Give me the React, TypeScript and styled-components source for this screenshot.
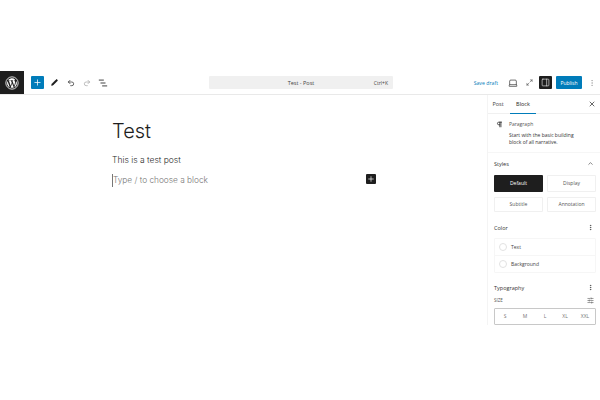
import React from "react";
import styled, { createGlobalStyle } from "styled-components";
import { Plus, Undo2, Redo2, X, ChevronUp, MoreVertical, SlidersHorizontal, Pilcrow, Laptop, Maximize2, PanelRight, Pen } from "lucide-react";

const Global = createGlobalStyle`
  html, body { margin: 0; padding: 0; background: #fff; }
  body { font-family: "Open Sans", "Liberation Sans", sans-serif; color: #1e1e1e; }
  button { font-family: inherit; border: 0; background: none; padding: 0; }
`;

const Page = styled.div`
  width: 600px;
  height: 400px;
  padding-top: 71px;
  box-sizing: border-box;
  overflow: hidden;
`;

const Header = styled.header`
  height: 23px;
  display: flex;
  align-items: center;
  border-bottom: 1px solid #e9e9e9;
`;

const Logo = styled.div`
  width: 24px;
  height: 23px;
  background: #1e1e1e;
  display: flex;
  align-items: center;
  justify-content: center;
`;

const Tools = styled.div`
  width: 185px;
  padding-left: 7px;
  display: flex;
  align-items: center;
  gap: 3px;
  box-sizing: border-box;
`;

const Inserter = styled.button`
  width: 13px;
  height: 13px;
  background: #007cba;
  color: #fff;
  display: flex;
  align-items: center;
  justify-content: center;
  border-radius: 1px;
  margin-right: 1px;
`;

const ToolIcon = styled.span<{ $dim?: boolean }>`
  width: 13px;
  height: 13px;
  display: flex;
  align-items: center;
  justify-content: center;
  color: ${(p) => (p.$dim ? "#a0a0a0" : "#1e1e1e")};
`;

const Command = styled.div`
  width: 184px;
  height: 13px;
  background: #f0f0f0;
  border-radius: 1px;
  display: flex;
  align-items: center;
  justify-content: flex-end;
  position: relative;
  padding-right: 5px;
  box-sizing: border-box;
  font-size: 5px;
  color: #444;
`;

const CommandTitle = styled.span`
  position: absolute;
  left: 0;
  right: 0;
  text-align: center;
  font-size: 5.5px;
`;

const Actions = styled.div`
  flex: 1;
  display: flex;
  align-items: center;
  justify-content: flex-end;
`;

const SaveDraft = styled.button`
  font-size: 5.2px;
  color: #007cba;
  margin-right: 8.5px;
`;

const ActionIcon = styled.span<{ $active?: boolean; $gap: number }>`
  width: 13px;
  height: 13px;
  margin-right: ${(p) => p.$gap}px;
  display: flex;
  align-items: center;
  justify-content: center;
  border-radius: 1px;
  color: ${(p) => (p.$active ? "#fff" : "#1e1e1e")};
  background: ${(p) => (p.$active ? "#1e1e1e" : "transparent")};
`;

const Publish = styled.button`
  width: 26px;
  height: 13px;
  background: #007cba;
  color: #fff;
  font-size: 5px;
  border-radius: 1px;
  margin-right: 3.5px;
`;

const Body = styled.div`
  display: flex;
  height: 230px;
`;

const Canvas = styled.main`
  flex: 1;
  padding: 24px 0 0 112px;
  font-family: Inter, "Liberation Sans", sans-serif;
  position: relative;
`;

const Title = styled.h1`
  margin: 0 0 10px;
  font-size: 20px;
  line-height: 25px;
  font-weight: 300;
  color: #1e1e1e;
`;

const Para = styled.p`
  margin: 0 0 7px;
  font-size: 8.5px;
  line-height: 13px;
  font-weight: 300;
  color: #2a2a2a;
`;

const Placeholder = styled.p`
  margin: 0;
  font-size: 8.3px;
  line-height: 13px;
  font-weight: 300;
  color: #767676;
  border-left: 1px solid #777;
  width: 120px;
`;

const BlockAdd = styled.button`
  position: absolute;
  left: 366px;
  top: 79px;
  width: 10px;
  height: 10px;
  background: #1e1e1e;
  color: #fff;
  display: flex;
  align-items: center;
  justify-content: center;
  border-radius: 1px;
`;

const Sidebar = styled.aside`
  width: 113px;
  box-sizing: border-box;
  border-left: 1px solid #f4f4f4;
  font-size: 5px;
  color: #1e1e1e;
`;

const Tabs = styled.div`
  height: 18px;
  display: flex;
  align-items: stretch;
  padding: 0 4px 0 6px;
  border-bottom: 1px solid #f0f0f0;
`;

const Tab = styled.div<{ $active?: boolean }>`
  display: flex;
  align-items: center;
  justify-content: center;
  width: 26px;
  font-size: 5.5px;
  margin-right: ${(p) => (p.$active ? "auto" : "-3px")};
  margin-bottom: -1px;
  margin-left: ${(p) => (p.$active ? "2px" : "-9px")};
  border-bottom: 1px solid ${(p) => (p.$active ? "#007cba" : "transparent")};
  color: ${(p) => (p.$active ? "#1e1e1e" : "#444")};
`;

const Close = styled.span`
  display: flex;
  align-items: center;
`;

const BlockCard = styled.div`
  display: flex;
  gap: 6px;
  padding: 7px 8px 5px;
  border-bottom: 1px solid #f6f6f6;
`;

const CardText = styled.div`
  font-size: 5px;
  line-height: 7.5px;
  color: #333;
`;

const CardName = styled.div`
  margin-bottom: 3px;
  color: #555;
`;

const Section = styled.section`
  padding: 0 4px 0 6px;
`;

const SectionHead = styled.div<{ $height: number }>`
  height: ${(p) => p.$height}px;
  display: flex;
  align-items: center;
  justify-content: space-between;
  padding-right: 2.5px;
  font-size: 5.5px;
  color: #333;
`;

const StyleGrid = styled.div`
  display: grid;
  grid-template-columns: 49px 49px;
  grid-template-rows: 17px 15px;
  gap: 5px 4px;
  margin-bottom: 6px;
`;

const StyleBtn = styled.button<{ $active?: boolean }>`
  font-size: 5px;
  border-radius: 1px;
  color: ${(p) => (p.$active ? "#fff" : "#555")};
  background: ${(p) => (p.$active ? "#1e1e1e" : "#fff")};
  box-shadow: ${(p) => (p.$active ? "none" : "inset 0 0 0 1px #f0f0f0")};
`;

const ColorList = styled.div`
  border: 1px solid #f6f6f6;
  border-radius: 1px;
  margin-bottom: 4px;
`;

const ColorRow = styled.div<{ $last?: boolean }>`
  height: 16px;
  display: flex;
  align-items: center;
  gap: 4px;
  padding-left: 4px;
  font-size: 5px;
  color: #444;
  border-bottom: ${(p) => (p.$last ? "0" : "1px solid #f6f6f6")};
`;

const Swatch = styled.span`
  width: 8px;
  height: 8px;
  box-sizing: border-box;
  border-radius: 50%;
  border: 1px solid #e2e2e2;
`;

const SizeHead = styled.div`
  display: flex;
  align-items: center;
  justify-content: space-between;
  padding-right: 2.5px;
  font-size: 4.5px;
  color: #555;
  height: 9px;
  margin-top: -3px;
  margin-bottom: 3px;
`;

const Sizes = styled.div`
  height: 15px;
  display: grid;
  grid-template-columns: repeat(5, 1fr);
  align-items: center;
  text-align: center;
  border: 1px solid #c8c8c8;
  border-radius: 1px;
  font-size: 5px;
  color: #777;
`;

function WpLogo() {
  return (
    <svg width="14" height="14" viewBox="0 0 24 24" fill="none">
      <circle cx="12" cy="12" r="10.6" stroke="#fff" strokeWidth="1.4" />
      <path
        fill="#fff"
        d="M3.6 12c0 3.3 1.9 6.2 4.7 7.5L4.3 8.6A8.4 8.4 0 0 0 3.6 12zm14-.4c0-1-.4-1.8-.7-2.3-.4-.7-.8-1.2-.8-1.9 0-.7.6-1.4 1.3-1.4h.1A8.4 8.4 0 0 0 5 7.4h.5c.9 0 2.2-.1 2.2-.1.4 0 .5.6 0 .7 0 0-.4 0-.9.1l2.9 8.7 1.8-5.3-1.3-3.4c-.4 0-.8-.1-.8-.1-.5 0-.4-.7 0-.7 0 0 1.3.1 2.1.1.9 0 2.2-.1 2.2-.1.4 0 .5.6 0 .7 0 0-.4 0-.9.1l2.9 8.6.8-2.7c.3-1.1.6-1.9.6-2.7zm-5.4 1.1-2.4 7a8.4 8.4 0 0 0 5.2-.1l-2.8-6.9zm7-4.6.1.9c0 .9-.2 1.8-.7 3.1l-2.6 7.5A8.4 8.4 0 0 0 19.2 8.1z"
      />
    </svg>
  );
}

function ListView() {
  return (
    <svg width="10" height="10" viewBox="0 0 12 12" fill="none" stroke="#1e1e1e" strokeWidth="1">
      <path d="M1 2.5h6M3 6h6M5 9.5h6" />
    </svg>
  );
}

export default function App() {
  return (
    <Page>
      <Global />
      <Header>
        <Logo>
          <WpLogo />
        </Logo>
        <Tools>
          <Inserter>
            <Plus size={9} strokeWidth={2} />
          </Inserter>
          <ToolIcon>
            <Pen size={7} fill="#1e1e1e" />
          </ToolIcon>
          <ToolIcon>
            <Undo2 size={8} />
          </ToolIcon>
          <ToolIcon $dim>
            <Redo2 size={8} />
          </ToolIcon>
          <ToolIcon>
            <ListView />
          </ToolIcon>
        </Tools>
        <Command>
          <CommandTitle>Test - Post</CommandTitle>
          <span>Ctrl+K</span>
        </Command>
        <Actions>
          <SaveDraft>Save draft</SaveDraft>
          <ActionIcon $gap={3}>
            <Laptop size={10} strokeWidth={1.5} />
          </ActionIcon>
          <ActionIcon $gap={3.5}>
            <Maximize2 size={7} strokeWidth={1.5} />
          </ActionIcon>
          <ActionIcon $active $gap={4}>
            <PanelRight size={9} strokeWidth={1.5} />
          </ActionIcon>
          <Publish>Publish</Publish>
          <ActionIcon $gap={1.5}>
            <MoreVertical size={8} color="#aaa" />
          </ActionIcon>
        </Actions>
      </Header>
      <Body>
        <Canvas>
          <Title>Test</Title>
          <Para>This is a test post</Para>
          <Placeholder>Type / to choose a block</Placeholder>
          <BlockAdd>
            <Plus size={8} strokeWidth={2} />
          </BlockAdd>
        </Canvas>
        <Sidebar>
          <Tabs>
            <Tab>Post</Tab>
            <Tab $active>Block</Tab>
            <Close>
              <X size={8} />
            </Close>
          </Tabs>
          <BlockCard>
            <Pilcrow size={7} strokeWidth={2.5} />
            <CardText>
              <CardName>Paragraph</CardName>
              Start with the basic building
              <br />
              block of all narrative.
            </CardText>
          </BlockCard>
          <Section>
            <SectionHead $height={22}>
              Styles
              <ChevronUp size={7} />
            </SectionHead>
            <StyleGrid>
              <StyleBtn $active>Default</StyleBtn>
              <StyleBtn>Display</StyleBtn>
              <StyleBtn>Subtitle</StyleBtn>
              <StyleBtn>Annotation</StyleBtn>
            </StyleGrid>
            <SectionHead $height={20}>
              Color
              <MoreVertical size={7} />
            </SectionHead>
            <ColorList>
              <ColorRow>
                <Swatch />
                Text
              </ColorRow>
              <ColorRow $last>
                <Swatch />
                Background
              </ColorRow>
            </ColorList>
            <SectionHead $height={22}>
              Typography
              <MoreVertical size={7} />
            </SectionHead>
            <SizeHead>
              SIZE
              <SlidersHorizontal size={7} />
            </SizeHead>
            <Sizes>
              <span>S</span>
              <span>M</span>
              <span>L</span>
              <span>XL</span>
              <span>XXL</span>
            </Sizes>
          </Section>
        </Sidebar>
      </Body>
    </Page>
  );
}
